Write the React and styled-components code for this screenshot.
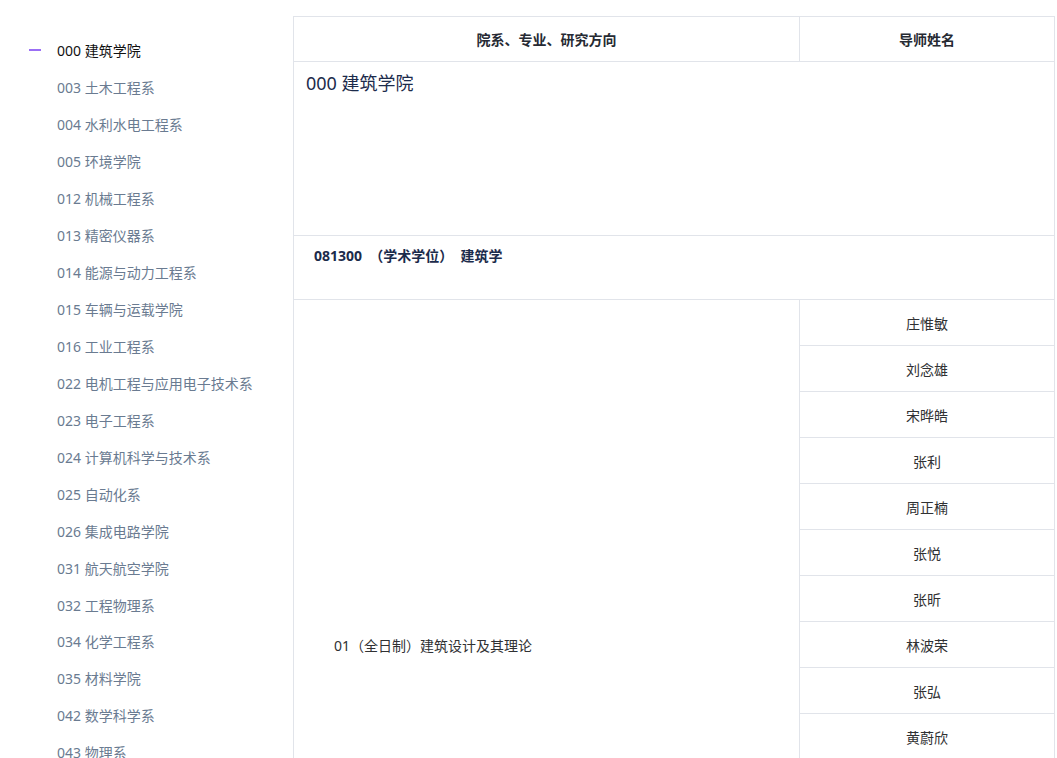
import React from "react";
import styled, { createGlobalStyle } from "styled-components";

const GlobalStyle = createGlobalStyle`
  body {
    margin: 0;
    background: #fff;
    font-family: "Noto Sans", "Noto Sans CJK SC", sans-serif;
  }
`;

const Page = styled.div`
  display: flex;
  align-items: flex-start;
  padding-top: 16px;
`;

const Sidebar = styled.ul`
  width: 293px;
  flex-shrink: 0;
  margin: 0;
  padding: 16px 0 0 29px;
  box-sizing: border-box;
  list-style: none;
`;

const SideItem = styled.li`
  display: flex;
  align-items: center;
  height: 36.95px;
  gap: 16px;
  font-size: 14px;
  color: ${(p) => (p.$active ? "#111" : "#6a7b91")};
  white-space: nowrap;
  cursor: pointer;
`;

const Marker = styled.span`
  width: 12px;
  height: 2px;
  background: ${(p) => (p.$active ? "#9b6ff5" : "transparent")};
  flex-shrink: 0;
`;

const Table = styled.table`
  width: 762px;
  border-collapse: collapse;
  table-layout: fixed;
  font-family: "Noto Sans", "Noto Sans CJK SC", sans-serif;
  font-size: 14px;
  color: #303133;
`;

const Th = styled.th`
  height: 45px;
  box-sizing: border-box;
  padding: 0;
  border: 1px solid #e1e4ea;
  font-weight: 700;
  font-size: 14px;
  color: #262a33;
  text-align: center;
`;

const TitleCell = styled.td`
  height: 166px;
  border: 1px solid #e1e4ea;
  padding: 7px 12px 0;
  vertical-align: top;
  font-size: 18px;
  color: #1c2b4b;
`;

const MajorCell = styled.td`
  height: 54px;
  border: 1px solid #e1e4ea;
  padding: 9px 20px 0;
  vertical-align: top;
  font-size: 14px;
  font-weight: 700;
  color: #1c2b4b;
  white-space: pre;
`;

const DirectionCell = styled.td`
  border: 1px solid #e1e4ea;
  padding: 0 40px;
  vertical-align: middle;
  color: #303133;
`;

const NameCell = styled.td`
  height: 45px;
  border: 1px solid #e1e4ea;
  padding: 0;
  text-align: center;
  color: #303133;
`;

const departments = [
  "000 建筑学院",
  "003 土木工程系",
  "004 水利水电工程系",
  "005 环境学院",
  "012 机械工程系",
  "013 精密仪器系",
  "014 能源与动力工程系",
  "015 车辆与运载学院",
  "016 工业工程系",
  "022 电机工程与应用电子技术系",
  "023 电子工程系",
  "024 计算机科学与技术系",
  "025 自动化系",
  "026 集成电路学院",
  "031 航天航空学院",
  "032 工程物理系",
  "034 化学工程系",
  "035 材料学院",
  "042 数学科学系",
  "043 物理系",
  "044 化学系",
];

const tutors = [
  "庄惟敏",
  "刘念雄",
  "宋晔皓",
  "张利",
  "周正楠",
  "张悦",
  "张昕",
  "林波荣",
  "张弘",
  "黄蔚欣",
  "程晓青",
  "王辉",
  "徐卫国",
  "单军",
  "李晓东",
];

function App() {
  return (
    <>
      <GlobalStyle />
      <Page>
        <Sidebar>
          {departments.map((d, i) => (
            <SideItem key={d} $active={i === 0}>
              <Marker $active={i === 0} />
              {d}
            </SideItem>
          ))}
        </Sidebar>
        <Table>
          <colgroup>
            <col style={{ width: 506 }} />
            <col />
          </colgroup>
          <thead>
            <tr>
              <Th>院系、专业、研究方向</Th>
              <Th>导师姓名</Th>
            </tr>
          </thead>
          <tbody>
            <tr>
              <TitleCell colSpan={2}>000 建筑学院</TitleCell>
            </tr>
            <tr>
              <MajorCell colSpan={2}>{"081300  （学术学位）  建筑学"}</MajorCell>
            </tr>
            {tutors.map((t, i) => (
              <tr key={t}>
                {i === 0 && (
                  <DirectionCell rowSpan={tutors.length}>
                    01（全日制）建筑设计及其理论
                  </DirectionCell>
                )}
                <NameCell>{t}</NameCell>
              </tr>
            ))}
          </tbody>
        </Table>
      </Page>
    </>
  );
}

export default App;
